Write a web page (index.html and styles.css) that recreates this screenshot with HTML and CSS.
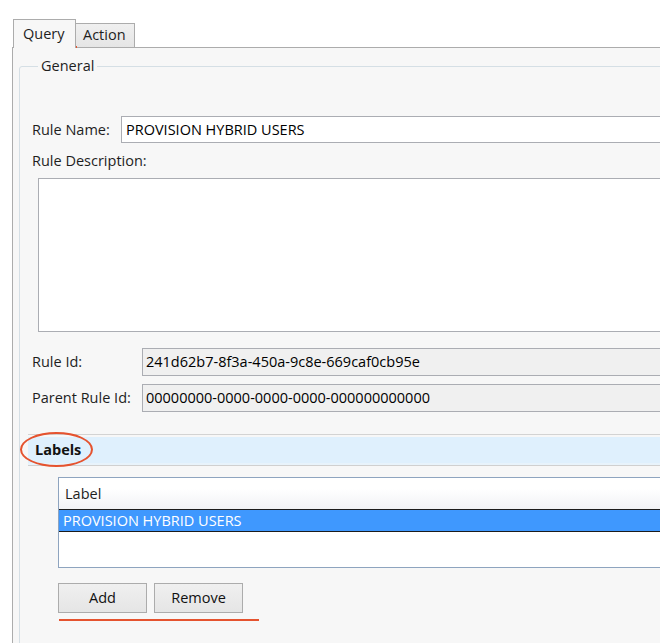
FILE: index.html
```html
<!DOCTYPE html>
<html lang="en">
<head>
  <meta charset="UTF-8">
  <title>Rule editor</title>
  <link rel="stylesheet" href="styles.css">
</head>
<body>
  <div class="tabs">
    <div class="tab active">Query</div>
    <div class="tab">Action</div>
  </div>

  <div class="panel">
    <fieldset class="group">
      <legend>General</legend>

      <div class="row name-row">
        <label class="lbl">Rule Name:</label>
        <div class="field name-field">PROVISION HYBRID USERS</div>
      </div>

      <div class="lbl desc-lbl">Rule Description:</div>
      <div class="field desc-field"></div>

      <div class="row id-row">
        <label class="lbl">Rule Id:</label>
        <div class="field readonly">241d62b7-8f3a-450a-9c8e-669caf0cb95e</div>
      </div>
      <div class="row parent-row">
        <label class="lbl">Parent Rule Id:</label>
        <div class="field readonly">00000000-0000-0000-0000-000000000000</div>
      </div>

      <div class="expander">Labels</div>

      <div class="listbox">
        <div class="list-head">Label</div>
        <div class="list-item selected">PROVISION HYBRID USERS</div>
      </div>

      <div class="buttons">
        <div class="btn">Add</div>
        <div class="btn">Remove</div>
      </div>
    </fieldset>
  </div>

  <!-- annotations drawn over the screenshot -->
  <div class="mark mark-tab"></div>
  <div class="mark mark-labels"></div>
  <div class="mark mark-buttons"></div>
</body>
</html>
```

FILE: styles.css
```css
* {
  box-sizing: border-box;
}
html, body {
  height: 100%;
}
body {
  margin: 0;
  background: #fff;
  font-family: "Open Sans", "Noto Sans", sans-serif;
  font-size: 14.5px;
  color: #1e1e1e;
  overflow: hidden;
  position: relative;
}

/* tabs */
.tabs {
  display: flex;
  align-items: flex-end;
  padding: 18px 0 0 13px;
  height: 47px;
}
.tab {
  height: 24px;
  width: 60px;
  padding-left: 7px;
  line-height: 22px;
  border: 1px solid #acacac;
  border-bottom: none;
  margin-left: -1px;
  background: linear-gradient(#f0f0f0, #e5e5e5);
}
.tab.active {
  height: 29px;
  width: 63px;
  margin-left: 0;
  padding-left: 9px;
  padding-top: 1px;
  line-height: 26px;
  background: #f7f7f7;
  position: relative;
  z-index: 1;
  margin-bottom: -1px;
}

/* panel */
.panel {
  margin-left: 12px;
  width: calc(100% + 20px);
  height: calc(100% - 46px);
  border: 1px solid #acacac;
  background: #f7f7f7;
  padding: 0 0 0 6px;
}
.group {
  margin: 9px 0 0 0;
  padding: 0 0 0 12px;
  height: 100%;
  border: 1px solid #d5dfe5;
  border-radius: 3px;
  min-width: 0;
}
.group legend {
  padding: 0 3px;
  margin-left: 6px;
  line-height: 18px;
  color: #1e1e1e;
}

.row {
  display: flex;
  align-items: center;
}
.lbl {
  line-height: 20px;
}
.field {
  flex: 1;
  height: 27px;
  line-height: 25px;
  padding-left: 4px;
  border: 1px solid #abadb3;
  background: #fff;
  color: #000;
  white-space: nowrap;
}
.name-row {
  margin-top: 41px;
}
.name-row .lbl {
  width: 89px;
}
.desc-lbl {
  margin-top: 8px;
  height: 20px;
}
.desc-field {
  margin: 7px 0 0 6px;
  height: 154px;
}
.id-row {
  margin-top: 16px;
}
.id-row .lbl,
.parent-row .lbl {
  width: 110px;
}
.parent-row {
  margin-top: 8px;
}
.readonly {
  background: #f0f0f0;
  height: 28px;
  padding-left: 3px;
}

/* labels expander */
.expander {
  margin: 22px 0 0 -4px;
  height: 32px;
  padding: 0 0 0 7px;
  line-height: 29px;
  font-weight: bold;
  color: #111;
  border-top: 1px solid #d3d3d3;
  border-bottom: 1px solid #d0d0d0;
  background: #dff0fd;
  box-shadow: inset 0 2px 0 #f7f7f7, inset 0 -2px 0 #e8f3fb;
}

.listbox {
  margin: 11px 0 0 26px;
  height: 91px;
  border: 1px solid #8ea4bf;
  background: #fff;
}
.list-head {
  height: 31px;
  line-height: 31px;
  padding-left: 6px;
  background: linear-gradient(#fff 35%, #f1f2f5);
}
.list-item {
  height: 23px;
  line-height: 21px;
  padding-left: 4px;
  white-space: nowrap;
}
.selected {
  background: #3f98fe;
  color: #fff;
  border-top: 1px solid #1c1c1c;
  border-bottom: 1px solid #1c1c1c;
}

.buttons {
  display: flex;
  gap: 7px;
  margin: 15px 0 0 26px;
}
.btn {
  width: 89px;
  height: 30px;
  line-height: 28px;
  text-align: center;
  border: 1px solid #acacac;
  background: linear-gradient(#f0f0f0, #e5e5e5);
  color: #111;
}

/* red annotations */
.mark {
  position: absolute;
  border: 0 solid #e5532f;
}
.mark-tab {
  left: 14px;
  top: 46px;
  width: 63px;
  border-top-width: 2px;
}
.mark-labels {
  left: 20px;
  top: 432px;
  width: 73px;
  height: 35px;
  border-width: 2px;
  border-radius: 50%;
}
.mark-buttons {
  left: 59px;
  top: 619px;
  width: 200px;
  border-top-width: 2px;
}
```
